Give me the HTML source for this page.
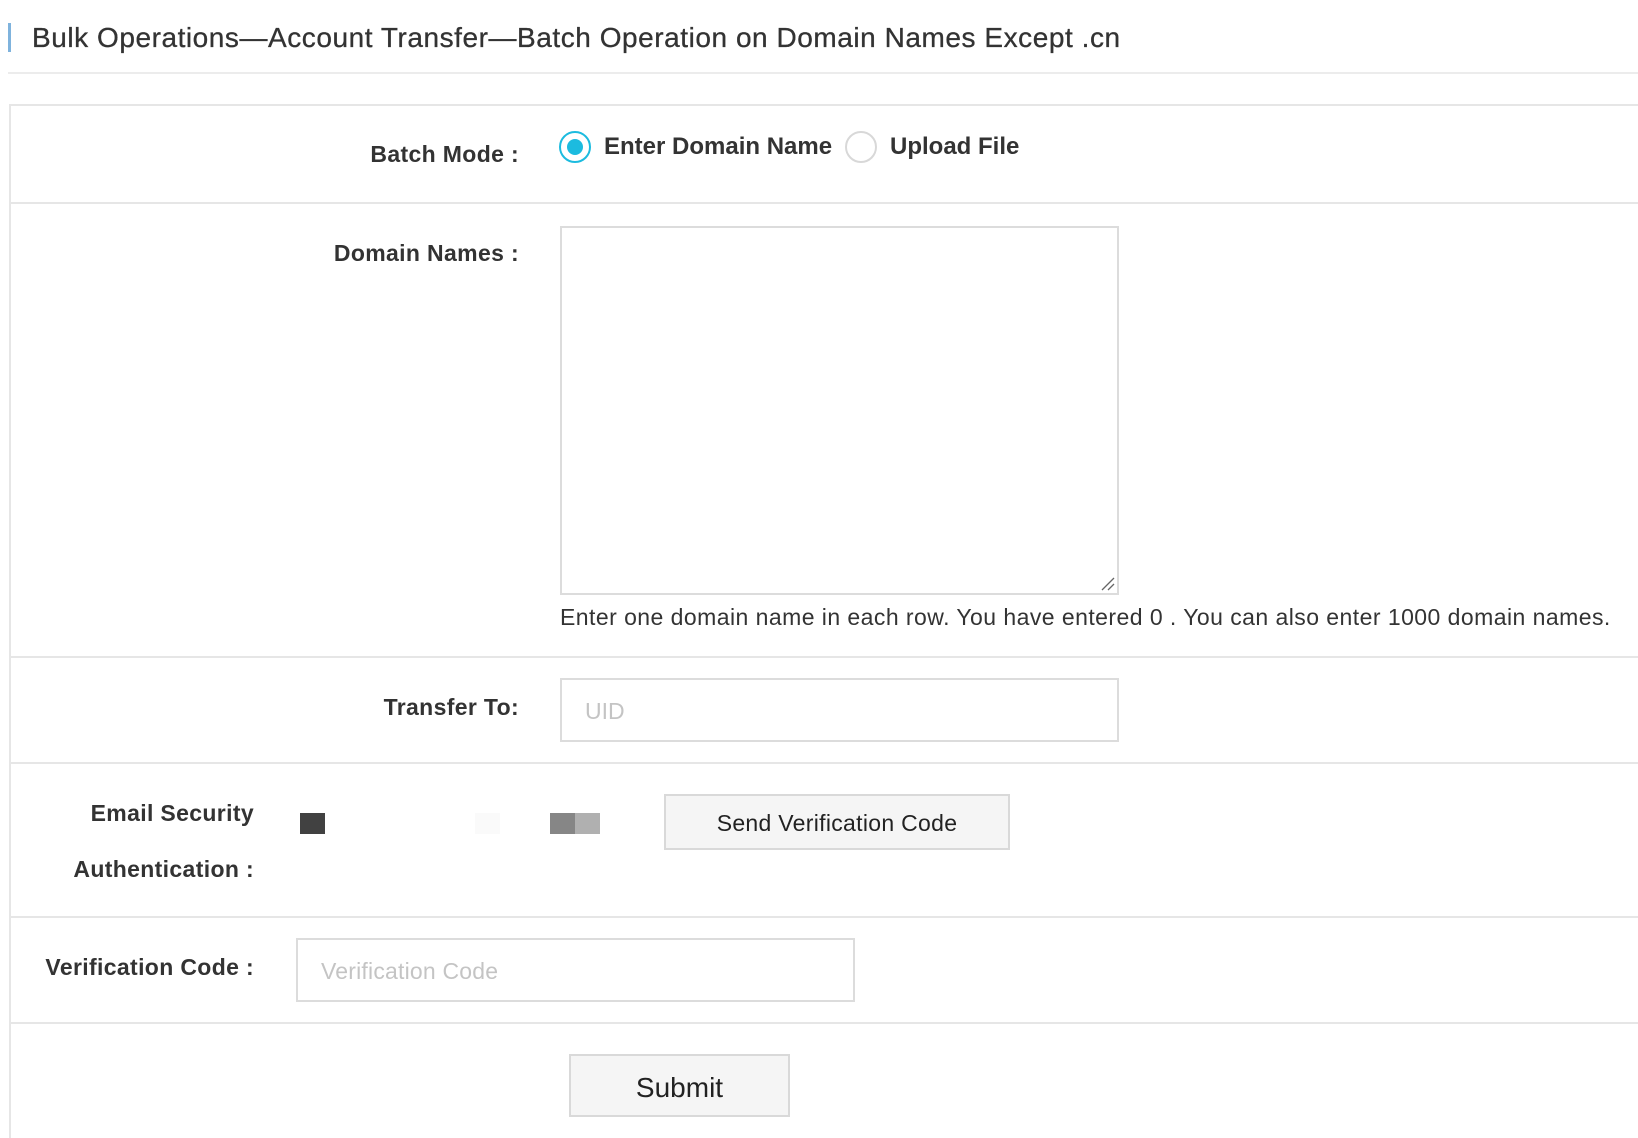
<!DOCTYPE html>
<html><head><meta charset="utf-8">
<style>
*{margin:0;padding:0;box-sizing:border-box}
html,body{width:1638px;height:1138px;overflow:hidden;background:#fff;font-family:"Liberation Sans",Arial,sans-serif;color:#333}
.a{position:absolute}
.hl{position:absolute;left:9px;right:0;height:2px;background:#e6e6e6}
.lab{position:absolute;font-weight:bold;font-size:23px;color:#333;text-align:right;white-space:nowrap;letter-spacing:0.35px}
.box{position:absolute;border:2px solid #dcdcdc;background:#fff}
.btn{position:absolute;border:2px solid #d9d9d9;background:#f5f5f5;color:#222;text-align:center;white-space:nowrap}
.ph{position:absolute;color:#c4c4c4;font-size:23px;white-space:nowrap}
</style></head><body>
<div class="a" style="left:8px;top:23px;width:3px;height:29px;background:#7fb3dd"></div>
<div class="a" style="left:32px;top:22px;font-size:28px;letter-spacing:0.55px;color:#333;white-space:nowrap;-webkit-text-stroke:0.3px #333">Bulk Operations—Account Transfer—Batch Operation on Domain Names Except .cn</div>
<div class="a" style="left:8px;right:0;top:72px;height:2px;background:#ececec"></div>

<div class="a" style="left:9px;top:104px;width:2px;height:1034px;background:#e6e6e6"></div>
<div class="hl" style="top:104px"></div>
<div class="hl" style="top:202px"></div>
<div class="hl" style="top:656px"></div>
<div class="hl" style="top:762px"></div>
<div class="hl" style="top:916px"></div>
<div class="hl" style="top:1022px"></div>

<div class="lab" style="right:1119px;top:141px">Batch Mode :</div>
<div class="a" style="left:559px;top:131px;width:32px;height:32px;border-radius:50%;border:2px solid #1cbbdf"></div>
<div class="a" style="left:567px;top:139px;width:16px;height:16px;border-radius:50%;background:#1cbbdf"></div>
<div class="a" style="left:604px;top:133px;font-size:24px;font-weight:bold;white-space:nowrap">Enter Domain Name</div>
<div class="a" style="left:845px;top:131px;width:32px;height:32px;border-radius:50%;border:2px solid #d8d8d8"></div>
<div class="a" style="left:890px;top:133px;font-size:24px;font-weight:bold;white-space:nowrap">Upload File</div>

<div class="lab" style="right:1119px;top:240px">Domain Names :</div>
<div class="box" style="left:560px;top:226px;width:559px;height:369px"></div>
<svg class="a" style="left:1100px;top:576px" width="16" height="16"><path d="M2 14L14 2M8 14L14 8" stroke="#666" stroke-width="1.3"/></svg>
<div class="a" style="left:560px;top:604px;font-size:23px;letter-spacing:0.45px;color:#333;white-space:nowrap">Enter one domain name in each row. You have entered 0 . You can also enter 1000 domain names.</div>

<div class="lab" style="right:1119px;top:694px">Transfer To:</div>
<div class="box" style="left:560px;top:678px;width:559px;height:64px"></div>
<div class="ph" style="left:585px;top:698px">UID</div>

<div class="lab" style="right:1384px;top:800px">Email Security</div>
<div class="lab" style="right:1384px;top:856px">Authentication :</div>
<div class="a" style="left:300px;top:813px;width:25px;height:21px;background:#414141"></div>
<div class="a" style="left:475px;top:813px;width:25px;height:21px;background:#fafafa"></div>
<div class="a" style="left:550px;top:813px;width:25px;height:21px;background:#868686"></div>
<div class="a" style="left:575px;top:813px;width:25px;height:21px;background:#b0b0b0"></div>
<div class="btn" style="left:664px;top:794px;width:346px;height:56px;font-size:23px;letter-spacing:0.3px;line-height:54px">Send Verification Code</div>

<div class="lab" style="right:1384px;top:954px">Verification Code :</div>
<div class="box" style="left:296px;top:938px;width:559px;height:64px"></div>
<div class="ph" style="left:321px;top:958px;letter-spacing:0.2px">Verification Code</div>

<div class="btn" style="left:569px;top:1054px;width:221px;height:63px;font-size:28px;line-height:63px">Submit</div>
</body></html>
